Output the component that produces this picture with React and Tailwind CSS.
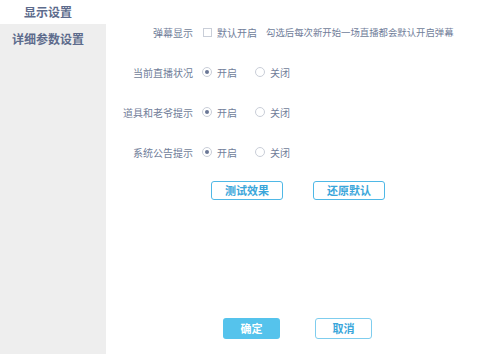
import React, { useState } from 'react';

const font = { fontFamily: '"Noto Sans CJK SC", "Noto Sans", sans-serif' };

const Radio = ({ checked, label, onClick }) => (
  <button onClick={onClick} className="flex items-center gap-[5px] text-[10px] text-[#707d99] whitespace-nowrap">
    <span className="w-[10px] h-[10px] rounded-full border border-[#c9ced8] bg-white flex items-center justify-center">
      {checked && <span className="w-[4px] h-[4px] rounded-full bg-[#6a7796]" />}
    </span>
    <span>{label}</span>
  </button>
);

const RadioRow = ({ label }) => {
  const [on, setOn] = useState(true);
  return (
    <div className="h-[40px] flex items-center">
      <div className="w-[87px] text-right text-[10px] text-[#707d99] whitespace-nowrap">{label}</div>
      <div className="ml-[9px] flex items-center gap-[18px]">
        <Radio checked={on} label="开启" onClick={() => setOn(true)} />
        <Radio checked={!on} label="关闭" onClick={() => setOn(false)} />
      </div>
    </div>
  );
};

const App = () => {
  const [tab, setTab] = useState(0);
  const [danmu, setDanmu] = useState(false);

  return (
    <div className="flex w-[478px] h-[354px] bg-white overflow-hidden" style={font}>
      <aside className="w-[106px] flex flex-col bg-[#eeeeee]">
        <button
          onClick={() => setTab(0)}
          className={`h-[24px] pr-[10px] text-[12px] font-bold text-[#5d6b8c] ${tab === 0 ? 'bg-white' : ''}`}
        >
          显示设置
        </button>
        <button
          onClick={() => setTab(1)}
          className={`h-[30px] pr-[10px] text-[12px] font-bold text-[#5d6b8c] ${tab === 1 ? 'bg-white' : ''}`}
        >
          详细参数设置
        </button>
      </aside>

      <main className="flex-1 flex flex-col">
        <div className="mt-[12px] h-[40px] flex items-center">
          <div className="w-[87px] text-right text-[10px] text-[#707d99] whitespace-nowrap">弹幕显示</div>
          <button onClick={() => setDanmu(!danmu)} className="ml-[10px] flex items-center gap-[5px] text-[10px] text-[#707d99] whitespace-nowrap">
            <span className="w-[9px] h-[9px] border border-[#c9ced8] bg-white flex items-center justify-center">
              {danmu && <span className="w-[5px] h-[5px] bg-[#6a7796]" />}
            </span>
            默认开启
          </button>
          <span className="ml-[9px] text-[9.4px] text-[#707d99] whitespace-nowrap">勾选后每次新开始一场直播都会默认开启弹幕</span>
        </div>
        <RadioRow label="当前直播状况" />
        <RadioRow label="道具和老爷提示" />
        <RadioRow label="系统公告提示" />

        <div className="mt-[9px] flex">
          <button className="ml-[105px] w-[72px] h-[19px] rounded-[3px] border border-[#4fb8e6] text-[11px] font-bold text-[#3aa6da] leading-none">
            测试效果
          </button>
          <button className="ml-[30px] w-[72px] h-[19px] rounded-[3px] border border-[#4fb8e6] text-[11px] font-bold text-[#3aa6da] leading-none">
            还原默认
          </button>
        </div>

        <div className="mt-auto mb-[15px] flex">
          <button className="ml-[117px] w-[57px] h-[21px] rounded-[3px] bg-[#55c3ec] text-[11px] font-bold text-white leading-none">
            确定
          </button>
          <button className="ml-[35px] w-[57px] h-[21px] rounded-[3px] border border-[#7fcdee] text-[11px] font-bold text-[#3aa6da] leading-none">
            取消
          </button>
        </div>
      </main>
    </div>
  );
};

export default App;
